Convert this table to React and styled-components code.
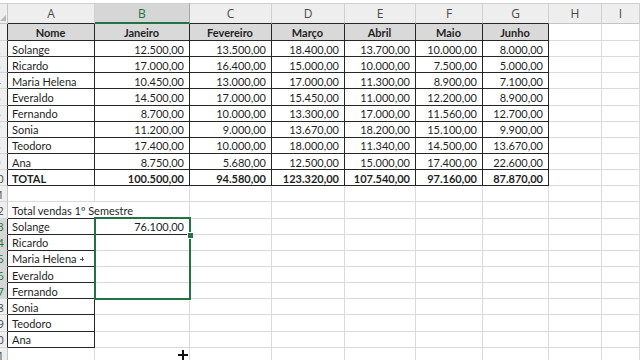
import React from 'react'
import styled, { createGlobalStyle } from 'styled-components'

const GRID = '#dadada'
const INK = '#262626'
const GREEN = '#217346'

const Global = createGlobalStyle`
    html, body {
        margin: 0;
        padding: 0;
        background: #fff;
        overflow: hidden;
    }
    body {
        font-family: Lato, "Liberation Sans", sans-serif;
    }
`

const Sheet = styled.div`
    position: relative;
    display: grid;
    grid-template-columns: 8px 87px 95px 82px 73px 71px 67px 66px 53px 1fr;
    grid-template-rows: 21px 17px repeat(20, 16.15px);
    width: 640px;
    height: 360px;
    padding-top: 3px;
    box-sizing: border-box;
    overflow: hidden;
`

const Corner = styled.div`
    position: relative;
    background: #eeeeee;
    border-top: 1px solid #d0d0d0;
    border-right: 1px solid #c4c4c4;
    border-bottom: 1px solid #c4c4c4;
    box-sizing: border-box;
    &::after {
        content: '';
        position: absolute;
        right: 1px;
        bottom: 2px;
        border-left: 6px solid transparent;
        border-bottom: 6px solid #b8b8b8;
    }
`

const ColHead = styled.div`
    display: flex;
    align-items: center;
    justify-content: center;
    background: ${p => p.$sel ? '#d6d6d6' : '#eeeeee'};
    color: ${p => p.$sel ? GREEN : '#4a4a4a'};
    border-top: 1px solid #d0d0d0;
    border-right: 1px solid ${p => p.$sel ? '#a8a8a8' : '#d0d0d0'};
    border-bottom: ${p => p.$sel ? `2px solid ${GREEN}` : `1px solid ${p.$edge ? INK : '#c4c4c4'}`};
    font: 12px "Open Sans", "Liberation Sans", sans-serif;
    box-sizing: border-box;
`

/* the row header is scrolled mostly out of view: only the last digit of two-digit rows shows */
const RowHead = styled.div`
    display: flex;
    align-items: center;
    overflow: hidden;
    padding-top: 1px;
    background: ${p => p.$sel ? '#d6d6d6' : '#eeeeee'};
    color: ${p => p.$sel ? GREEN : '#444'};
    border-right: 1px solid ${p => p.$edge ? INK : '#c4c4c4'};
    border-bottom: 1px solid #d6d6d6;
    font: 11px "Open Sans", "Liberation Sans", sans-serif;
    white-space: nowrap;
    box-sizing: border-box;
`

const RowLabel = styled.span`
    flex: 0 0 27px;
    margin-left: -16px;
    text-align: center;
`

const Cell = styled.div`
    display: flex;
    align-items: center;
    justify-content: ${p => p.$align === 'right' ? 'flex-end' : p.$align === 'center' ? 'center' : 'flex-start'};
    padding: 1px 5px 0 4px;
    background: ${p => p.$fill ? '#d9d9d9' : 'transparent'};
    color: #1f1f1f;
    font-size: 11px;
    font-weight: ${p => p.$bold ? 700 : 400};
    white-space: nowrap;
    border-right: 1px solid ${p => p.$noR ? 'transparent' : p.$darkR ? INK : GRID};
    border-bottom: 1px solid ${p => p.$darkB ? INK : GRID};
    box-sizing: border-box;
    min-width: 0;
`

const Selection = styled.div`
    position: absolute;
    left: 94px;
    top: 217px;
    width: 97px;
    height: 83px;
    border: 2px solid ${GREEN};
    box-sizing: border-box;
    pointer-events: none;
`

const FillHandle = styled.div`
    position: absolute;
    left: 187px;
    top: 232px;
    width: 5px;
    height: 5px;
    background: ${GREEN};
    border: 1px solid #fff;
`

const Cross = styled.div`
    position: absolute;
    left: ${p => p.$x}px;
    top: ${p => p.$y}px;
    width: ${p => p.$size}px;
    height: ${p => p.$size}px;
    &::before, &::after {
        content: '';
        position: absolute;
        background: ${p => p.$color};
    }
    &::before {
        left: 0;
        right: 0;
        top: calc(50% - ${p => p.$w / 2}px);
        height: ${p => p.$w}px;
    }
    &::after {
        top: 0;
        bottom: 0;
        left: calc(50% - ${p => p.$w / 2}px);
        width: ${p => p.$w}px;
    }
`

const letters = ['A', 'B', 'C', 'D', 'E', 'F', 'G', 'H', 'I']
const months = ['Janeiro', 'Fevereiro', 'Março', 'Abril', 'Maio', 'Junho']
const names = ['Solange', 'Ricardo', 'Maria Helena', 'Everaldo', 'Fernando', 'Sonia', 'Teodoro', 'Ana']
const values = [
    ['12.500,00', '13.500,00', '18.400,00', '13.700,00', '10.000,00', '8.000,00'],
    ['17.000,00', '16.400,00', '15.000,00', '10.000,00', '7.500,00', '5.000,00'],
    ['10.450,00', '13.000,00', '17.000,00', '11.300,00', '8.900,00', '7.100,00'],
    ['14.500,00', '17.000,00', '15.450,00', '11.000,00', '12.200,00', '8.900,00'],
    ['8.700,00', '10.000,00', '13.300,00', '17.000,00', '11.560,00', '12.700,00'],
    ['11.200,00', '9.000,00', '13.670,00', '18.200,00', '15.100,00', '9.900,00'],
    ['17.400,00', '10.000,00', '18.000,00', '11.340,00', '14.500,00', '13.670,00'],
    ['8.750,00', '5.680,00', '12.500,00', '15.000,00', '17.400,00', '22.600,00'],
]
const totals = ['100.500,00', '94.580,00', '123.320,00', '107.540,00', '97.160,00', '87.870,00']

const rowCells = (r) => {
    const cells = letters.map(() => ({}))
    if (r === 1) {
        cells[0] = { text: 'Nome', align: 'center', bold: true, fill: true }
        months.forEach((m, i) => { cells[i + 1] = { text: m, align: 'center', bold: true, fill: true } })
    } else if (r >= 2 && r <= 9) {
        cells[0] = { text: names[r - 2] }
        values[r - 2].forEach((v, i) => { cells[i + 1] = { text: v, align: 'right' } })
    } else if (r === 10) {
        cells[0] = { text: 'TOTAL', bold: true }
        totals.forEach((v, i) => { cells[i + 1] = { text: v, align: 'right', bold: true } })
    } else if (r === 12) {
        cells[0] = { text: 'Total vendas 1º Semestre', noR: true, darkB: true }
    } else if (r >= 13 && r <= 20) {
        cells[0] = { text: names[r - 13] }
        if (r === 13) cells[1] = { text: '76.100,00', align: 'right', darkB: true }
    }
    const inTable = r >= 1 && r <= 10
    return cells.map((c, i) => {
        if (inTable && i <= 6) return { darkR: true, darkB: true, ...c }
        if (r >= 13 && r <= 20 && i === 0) return { darkR: true, darkB: true, ...c }
        return c
    })
}

export default () => {
    const rows = Array.from({ length: 21 }, (_, i) => i + 1)
    return <>
        <Global />
        <Sheet>
            <Corner />
            {letters.map((l, i) => <ColHead key={l} $sel={l === 'B'} $edge={i <= 6}>{l}</ColHead>)}
            {rows.map(r => <React.Fragment key={r}>
                <RowHead $sel={r >= 13 && r <= 17} $edge={(r >= 1 && r <= 10) || (r >= 13 && r <= 20)}>
                    <RowLabel>{r}</RowLabel>
                </RowHead>
                {rowCells(r).map((c, i) =>
                    <Cell key={i} $align={c.align} $bold={c.bold} $fill={c.fill}
                        $darkR={c.darkR} $darkB={c.darkB} $noR={c.noR}>{c.text}</Cell>
                )}
            </React.Fragment>)}
            <Selection />
            <FillHandle />
            <Cross $x={80} $y={257} $size={4} $w={1} $color="#555" />
            <Cross $x={178} $y={350} $size={10} $w={2} $color="#111" />
        </Sheet>
    </>
}
